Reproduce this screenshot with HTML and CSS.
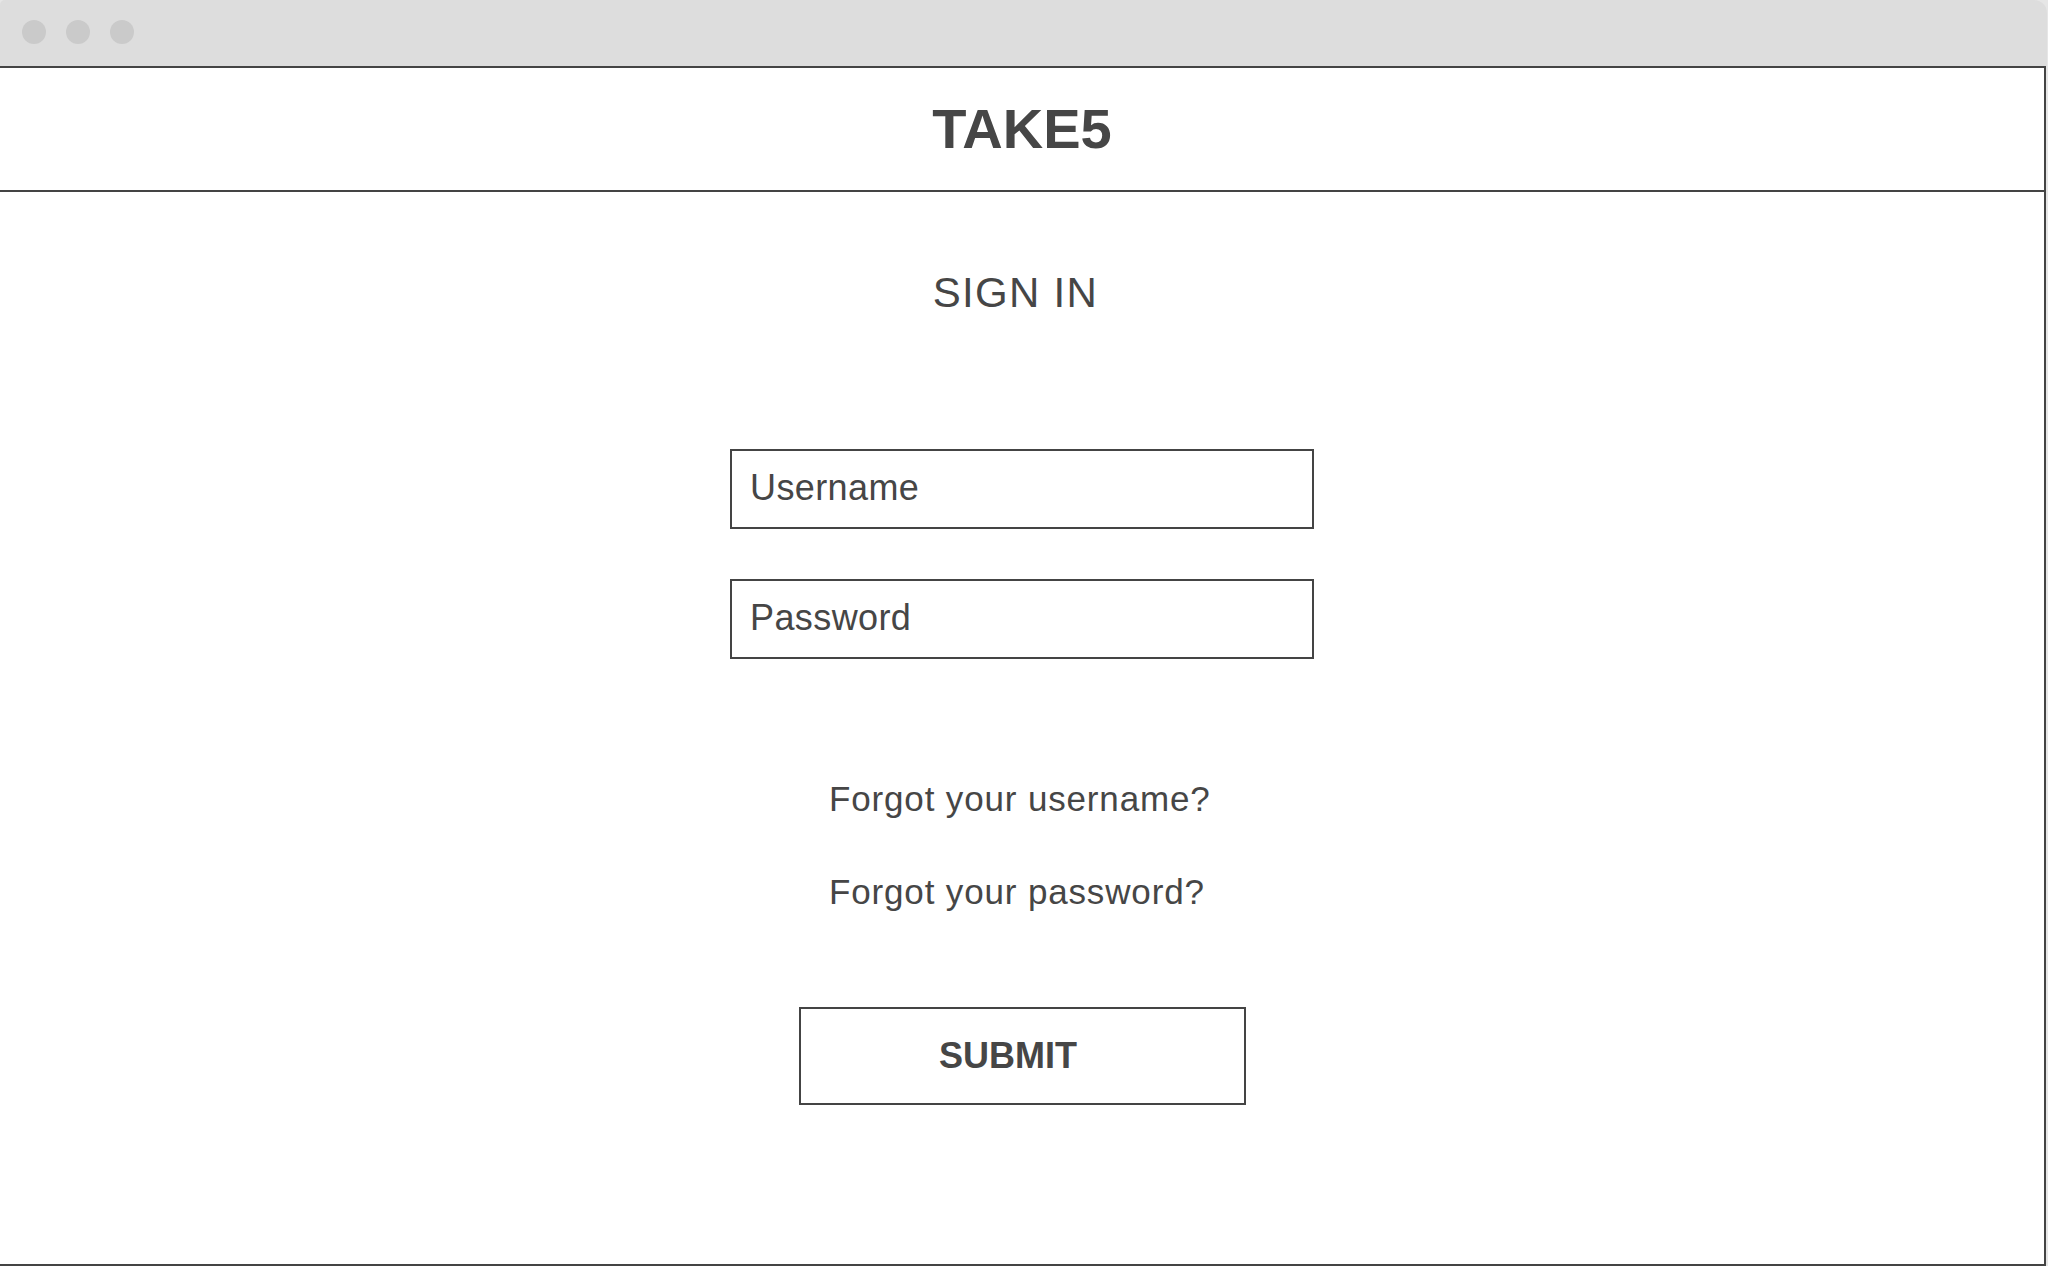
FILE: index.html
```html
<!DOCTYPE html>
<html lang="en">
<head>
<meta charset="utf-8">
<title>TAKE5 - Sign in</title>
<link rel="stylesheet" href="styles.css">
</head>
<body>
<div class="window">
  <div class="titlebar">
    <span class="dot"></span><span class="dot"></span><span class="dot"></span>
  </div>
  <div class="frame">
    <header class="header">TAKE5</header>
    <main class="main">
      <h1 class="heading">SIGN IN</h1>
      <div class="field field-first">Username</div>
      <div class="field field-second">Password</div>
      <div class="links">
        <div class="link">Forgot your username?</div>
        <div class="link link-second">Forgot your password?</div>
      </div>
      <div class="submit">SUBMIT</div>
    </main>
  </div>
</div>
</body>
</html>
```
FILE: styles.css
```css
html, body {
  margin: 0;
  padding: 0;
  background: #e6e6e6;
}
body {
  width: 2048px;
  height: 1266px;
  overflow: hidden;
  font-family: "Liberation Sans", Arial, sans-serif;
  color: #464646;
}
.window {
  width: 2047px;
  height: 1266px;
  display: flex;
  flex-direction: column;
}
.titlebar {
  height: 66px;
  box-sizing: border-box;
  padding: 20px 0 0 22px;
  background: #dddddd;
  border-radius: 5px 13px 0 0;
  display: flex;
  gap: 20px;
}
.dot {
  width: 24px;
  height: 24px;
  border-radius: 50%;
  background: #cacaca;
}
.frame {
  width: 2046px;
  flex: 1;
  box-sizing: border-box;
  background: #fff;
  border-top: 2px solid #444;
  border-right: 2px solid #444;
  border-bottom: 2px solid #444;
  display: flex;
  flex-direction: column;
}
.header {
  height: 124px;
  box-sizing: border-box;
  border-bottom: 2px solid #444;
  text-align: center;
  font-weight: bold;
  font-size: 56px;
  line-height: 122px;
}
.main {
  display: flex;
  flex-direction: column;
  align-items: center;
  padding-top: 81px;
}
.heading {
  margin: 0;
  font-weight: normal;
  font-size: 42px;
  line-height: 40px;
  letter-spacing: 1.3px;
  padding-right: 13px;
}
.field {
  width: 584px;
  height: 80px;
  box-sizing: border-box;
  border: 2px solid #444;
  padding: 0 17px 0 18px;
  font-size: 36px;
  line-height: 74px;
  letter-spacing: 0.4px;
}
.field-first {
  margin-top: 136px;
}
.field-second {
  margin-top: 50px;
}
.links {
  width: 584px;
  box-sizing: border-box;
  padding-left: 99px;
  margin-top: 120px;
}
.link {
  font-size: 35px;
  line-height: 40px;
  letter-spacing: 0.85px;
}
.link-second {
  margin-top: 53px;
}
.submit {
  margin-top: 95px;
  width: 447px;
  height: 98px;
  box-sizing: border-box;
  border: 2px solid #444;
  padding-right: 28px;
  text-align: center;
  font-weight: bold;
  font-size: 36px;
  line-height: 94px;
}
```
